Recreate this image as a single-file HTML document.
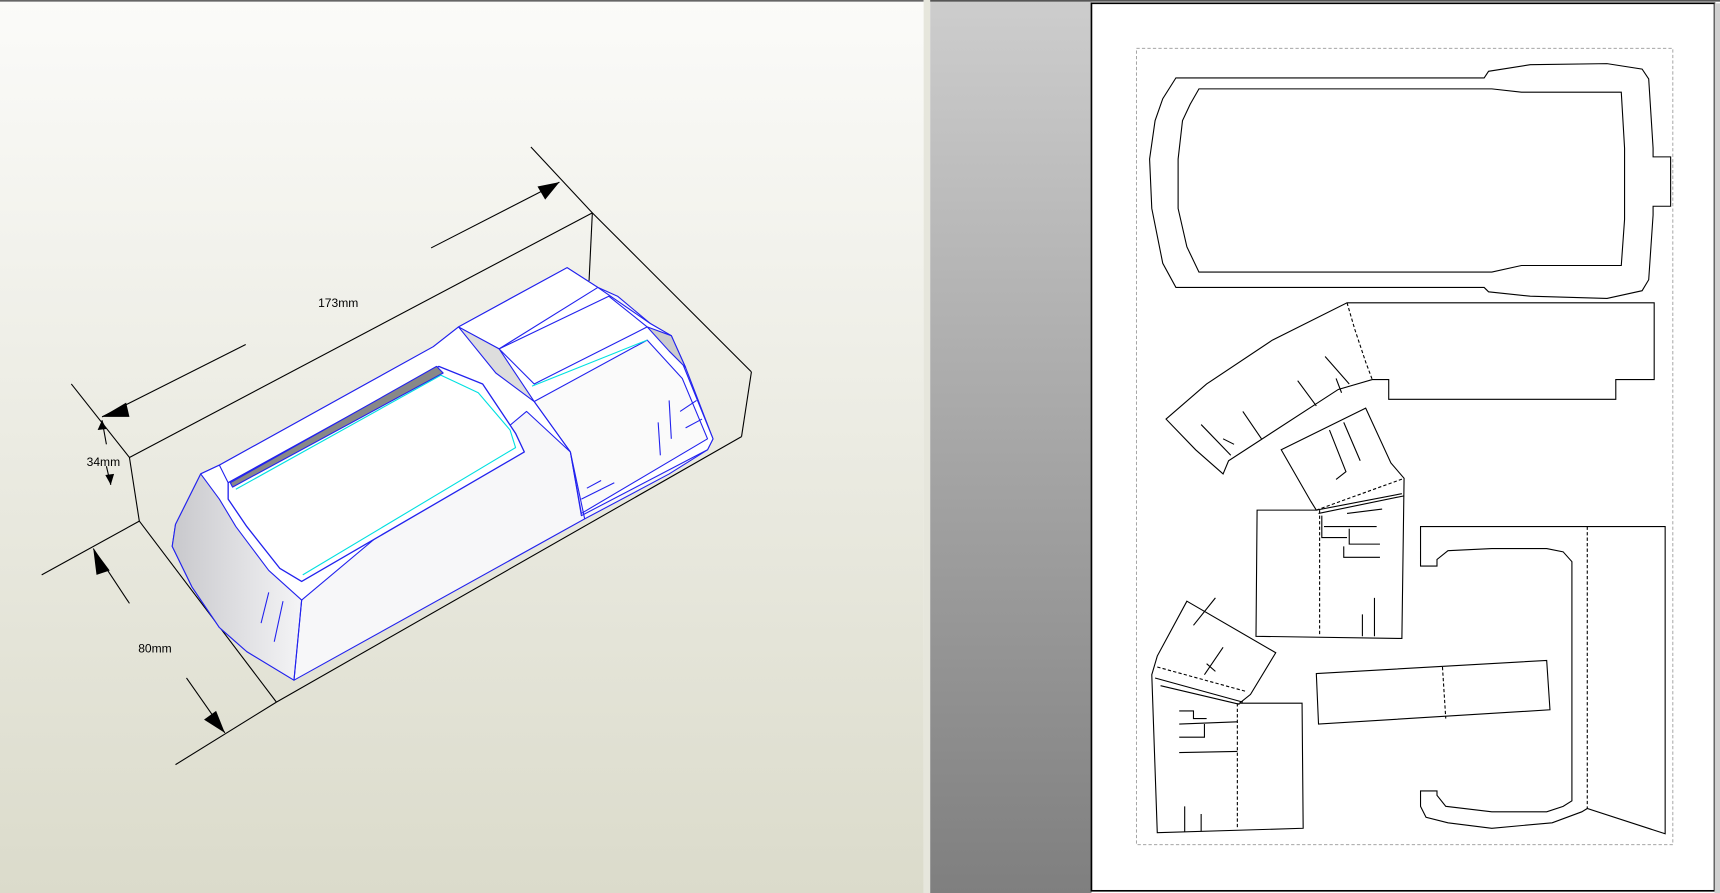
<!DOCTYPE html>
<html><head><meta charset="utf-8"><style>
html,body{margin:0;padding:0;width:1720px;height:893px;overflow:hidden;background:#fff}
svg{display:block}
text{font-family:"Liberation Sans",sans-serif;font-size:11px;fill:#000}
</style></head><body>
<svg width="1720" height="893" viewBox="0 0 1568 814" preserveAspectRatio="none" xmlns="http://www.w3.org/2000/svg">
<defs>
<linearGradient id="lg" x1="0" y1="0" x2="0" y2="1"><stop offset="0" stop-color="#fbfbf9"/><stop offset="1" stop-color="#dbdbcb"/></linearGradient>
<linearGradient id="gg" x1="0" y1="0" x2="0" y2="1"><stop offset="0" stop-color="#cdcdcd"/><stop offset="1" stop-color="#7f7f7f"/></linearGradient>
<linearGradient id="side" x1="0" y1="0" x2="1" y2="0"><stop offset="0" stop-color="#c8c8cc"/><stop offset="1" stop-color="#f4f4f6"/></linearGradient>
</defs>
<rect x="0" y="0" width="842" height="814" fill="url(#lg)"/>
<rect x="0" y="0" width="842" height="1.5" fill="#666"/>
<rect x="842" y="0" width="6" height="814" fill="#e6e6dc"/>
<rect x="848" y="0" width="147" height="814" fill="url(#gg)"/>
<rect x="848" y="0" width="720" height="1.5" fill="#555"/>
<rect x="995" y="3" width="568" height="809" fill="#fff" stroke="#000" stroke-width="1.5"/>
<rect x="1563" y="3" width="5" height="811" fill="#d0d0d0"/>

<!-- left: dimension lines -->
<g stroke="#000" stroke-width="1" fill="none">
<line x1="118" y1="417" x2="540" y2="194"/>
<line x1="540" y1="194" x2="685" y2="339"/>
<line x1="685" y1="339" x2="676" y2="398"/>
<line x1="540" y1="194" x2="537" y2="256"/>
<line x1="118" y1="417" x2="127" y2="475"/>
<line x1="127" y1="475" x2="252" y2="640"/>
<line x1="252" y1="640" x2="676" y2="398"/>
<line x1="65" y1="350" x2="118" y2="417"/>
<line x1="484" y1="134" x2="540" y2="194"/>
<line x1="393" y1="226" x2="510" y2="166"/>
<line x1="93" y1="380" x2="224" y2="314"/>
<line x1="38" y1="524" x2="127" y2="475"/>
<line x1="160" y1="697" x2="252" y2="640"/>
<line x1="85" y1="500" x2="118" y2="550"/>
<line x1="170" y1="618" x2="205" y2="668"/>
<line x1="93" y1="383" x2="97" y2="405"/>
<line x1="97" y1="425" x2="101" y2="442"/>
</g>
<g fill="#000">
<polygon points="510,166 490,170 497,182"/>
<polygon points="93,380 115,367 118,380"/>
<polygon points="85,500 100,520 88,524"/>
<polygon points="205,668 186,656 197,648"/>
<polygon points="93,383 89,392 97,391"/>
<polygon points="101,442 96,433 104,432"/>
</g>
<text x="290" y="280">173mm</text>
<text x="79" y="425">34mm</text>
<text x="126" y="595">80mm</text>

<!-- model -->
<g stroke="#2222ee" stroke-width="1" stroke-linejoin="round">
<path d="M160,478 L183,432 L200,424 L395,316 L418,298 L517,244 L545,262 L563,270 L593,295 L612,306 L625,335 L650,400 L645,410 L610,432 L533,473 L268,620 L225,594 L200,572 L175,535 L157,498 Z" fill="#f7f7f9"/>
<path d="M160,478 L183,432 L200,424 L215,474 L245,512 L275,547 L268,620 L225,594 L200,572 L175,535 L157,498 Z" fill="url(#side)"/>
<path d="M183,432 L200,424 L395,316 L418,298 L517,244 L545,262 L593,295 L612,306 L650,400 L645,410 L530,470 L520,412 L480,375 L275,547 L245,520 L215,480 L200,455 Z" fill="#fff"/>
<path d="M208,440 L400,334 L440,350 L470,395 L478,412 L275,530 L255,518 L225,480 L208,455 Z" fill="#fff" stroke-width="1.2"/>
<path d="M210,440 L398,334 L404,340 L212,444 Z" fill="#888"/>
<path d="M215,446 L402,342 L436,358 L465,392 L470,408 L276,524" fill="none" stroke="#00e0e0"/>
<path d="M418,298 L517,244 L545,262 L455,318 Z" fill="#fff"/>
<path d="M418,298 L455,318 L487,366 L452,340 Z" fill="#ddd"/>
<path d="M455,318 L555,270 L590,298 L487,350 Z" fill="#fff"/>
<path d="M487,366 L590,310 L622,345 L645,400 L530,468 L520,412 Z" fill="#fafafa"/>
<path d="M590,298 L612,306 L625,335 L610,320 Z" fill="#ccc"/>
<path d="M485,352 L590,310" fill="none" stroke="#00e0e0"/>
<path d="M208,440 L200,424 M275,547 L268,620 M520,412 L533,473 M487,366 L520,412" fill="none"/>
<path d="M245,540 L238,568 M258,548 L250,585 M610,365 L612,400 M600,385 L602,415 M530,455 L560,440 M535,445 L548,438 M620,375 L635,365 M625,390 L640,382" fill="none"/>
</g>

<!-- right: pattern page -->
<rect x="1036" y="44" width="489" height="726" fill="none" stroke="#999" stroke-width="0.8" stroke-dasharray="3,2"/>
<g stroke="#000" stroke-width="1" fill="none">
<path d="M1072,71 L1353,71 L1357,65 L1395,59 L1465,58 L1497,63 L1503,72 L1507,135 L1507,143 L1523,143 L1523,188 L1507,188 L1507,196 L1503,255 L1497,265 L1465,272 L1395,270 L1357,266 L1353,262 L1072,262 L1060,240 L1050,190 L1048,145 L1053,110 L1060,90 Z"/>
<path d="M1093,81 L1360,81 L1387,84 L1478,84 L1481,135 L1481,200 L1478,242 L1387,242 L1360,248 L1093,248 L1082,225 L1074,190 L1074,145 L1078,110 L1085,95 Z"/>
<path d="M1063,382 L1100,350 L1160,310 L1228,276 L1508,276 L1508,346 L1473,346 L1473,364 L1266,364 L1266,346 L1251,346 L1220,355 L1120,420 L1115,432 L1090,410 Z"/>
<path d="M1228,276 L1235,300 L1245,330 L1251,346" stroke-dasharray="3,2"/>
<path d="M1095,387 L1122,415 M1115,400 L1125,405 M1133,375 L1150,400 M1183,347 L1200,370 M1208,325 L1230,350 M1218,345 L1223,358"/>
<path d="M1168,410 L1245,372 L1268,422 L1280,436 L1278,582 L1145,580 L1146,465 L1200,465 L1195,457 Z"/>
<path d="M1200,465 L1280,436" stroke-dasharray="3,2"/>
<path d="M1200,465 L1278,450 M1202,468 L1280,452"/>
<path d="M1203,465 L1203,580" stroke-dasharray="3,2"/>
<path d="M1212,392 L1227,430 L1218,437 M1225,385 L1240,420 M1205,470 L1205,490 L1228,490 M1207,480 L1255,480 M1228,468 L1260,464 M1225,498 L1225,508 L1258,508 M1230,482 L1230,496 L1258,496 M1253,545 L1253,580 M1242,560 L1242,580"/>
<path d="M1082,548 L1163,595 L1140,633 L1130,641 L1187,641 L1188,755 L1055,759 L1050,615 L1055,598 Z"/>
<path d="M1055,608 L1135,630" stroke-dasharray="3,2"/>
<path d="M1053,618 L1133,640 M1058,625 L1130,642"/>
<path d="M1128,641 L1128,755" stroke-dasharray="3,2"/>
<path d="M1088,570 L1108,545 M1098,615 L1115,590 M1100,605 L1108,612 M1075,648 L1088,648 L1088,655 L1100,655 M1075,660 L1128,658 M1075,672 L1098,672 L1098,660 M1075,686 L1128,685 M1080,735 L1080,758 M1095,742 L1095,758"/>
<path d="M1200,614 L1410,602 L1413,647 L1202,660 Z"/>
<path d="M1315,608 L1318,655" stroke-dasharray="3,2"/>
<path d="M1295,480 L1518,480 L1518,760 L1447,737 L1442,740 L1415,750 L1360,755 L1320,750 L1300,745 L1295,735 L1295,721 L1310,721 L1310,725 L1318,735 L1360,740 L1410,740 L1425,735 L1433,730 L1433,512 L1425,503 L1410,500 L1360,500 L1320,502 L1310,510 L1310,516 L1295,516 Z"/>
<path d="M1447,480 L1447,737" stroke-dasharray="3,2"/>
</g>
</svg>
</body></html>
